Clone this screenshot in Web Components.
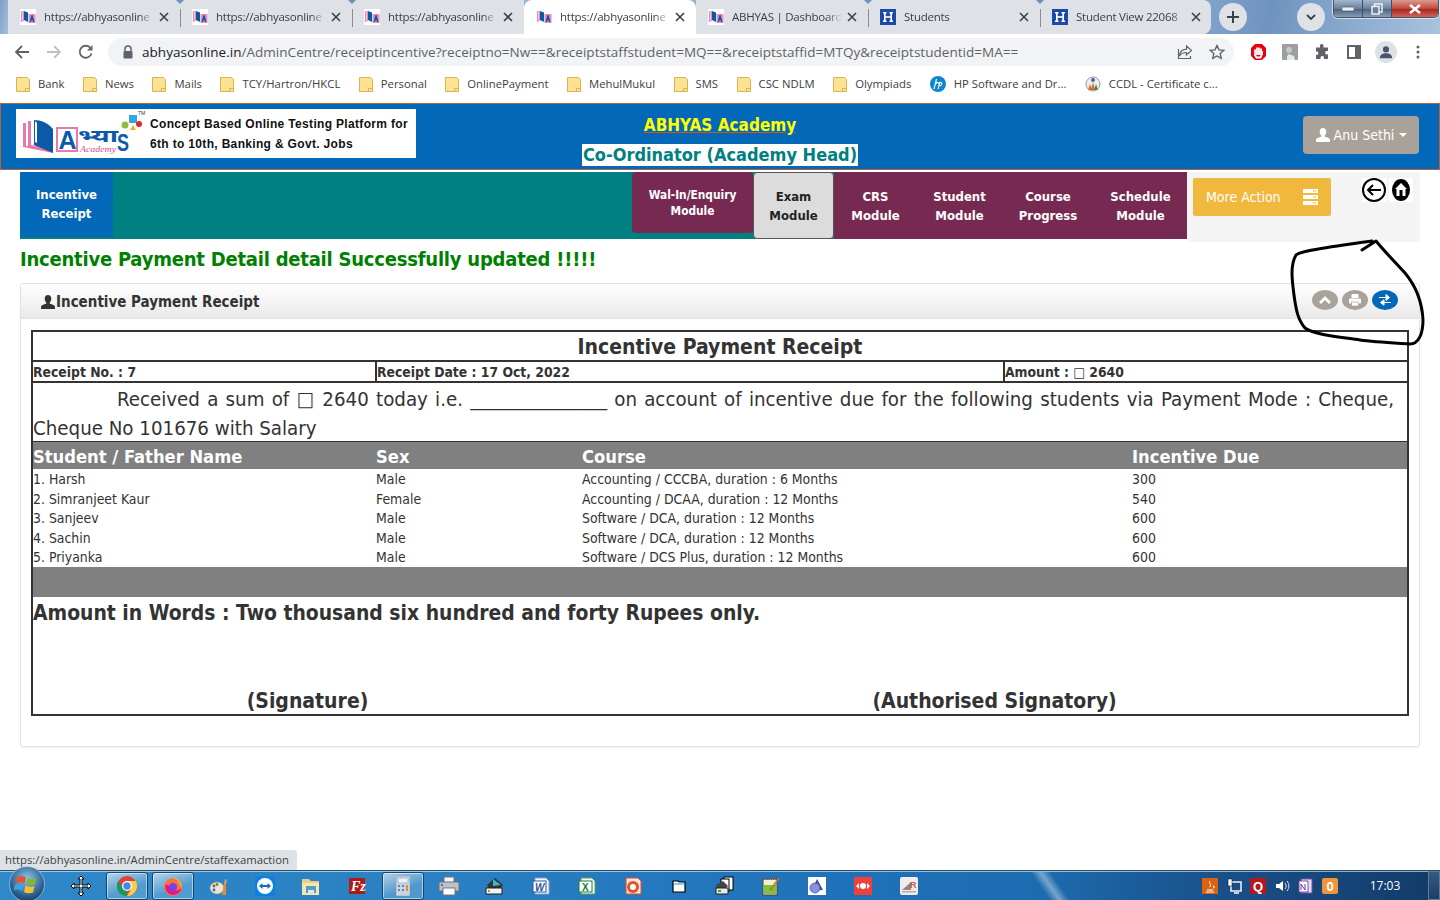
<!DOCTYPE html>
<html>
<head>
<meta charset="utf-8">
<title>Incentive Payment Receipt</title>
<style>
    html, body { margin: 0; height: 100%; background: #fff; overflow: hidden; }
    body { font-family: "DejaVu Sans Condensed", "DejaVu Sans", sans-serif; font-stretch: condensed; }
    #desk { position: relative; display: flex; flex-direction: column; width: 1440px; height: 900px; overflow: hidden; }
    #main { flex: 1; min-height: 0; }
</style>
</head>
<body>
<div id="desk">
    <browser-tabs></browser-tabs>
    <browser-toolbar url="abhyasonline.in" path="/AdminCentre/receiptincentive?receiptno=Nw==&amp;receiptstaffstudent=MQ==&amp;receiptstaffid=MTQy&amp;receiptstudentid=MA=="></browser-toolbar>
    <bookmark-bar></bookmark-bar>
    <div id="main">
        <app-header></app-header>
        <module-nav></module-nav>
        <flash-message>Incentive Payment Detail detail Successfully updated !!!!!</flash-message>
        <receipt-panel heading="Incentive Payment Receipt">
            <incentive-receipt></incentive-receipt>
        </receipt-panel>
    </div>
    <win-taskbar></win-taskbar>
    <status-bubble>https://abhyasonline.in/AdminCentre/staffexamaction</status-bubble>
    <pen-scribble></pen-scribble>
</div>

<script>
const UI_FONT = '"Open Sans", "Noto Sans", sans-serif';
const PAGE_FONT = '"DejaVu Sans Condensed", "DejaVu Sans", sans-serif';

const ABHYAS_ICON = `<svg width="16" height="16" viewBox="0 0 16 16"><rect width="16" height="16" fill="#fff"/>
    <path d="M1 2h1.500v11H1zM3 2h1v10H3z" fill="#e98ab8"/><path d="M4 2l4 1.500V13L4 11z" fill="#0b5aa8"/>
    <rect x="8.500" y="5" width="7" height="9" fill="#e98ab8"/><path d="M9.500 13l2-7h1l2 7h-1.400l-.4-1.500h-1.500L10.800 13z" fill="#0b5aa8"/></svg>`;
const H_ICON = `<svg width="16" height="16" viewBox="0 0 16 16"><rect width="16" height="16" fill="#1c4aa8"/>
    <rect x="3" y="3" width="3.500" height="1.500" fill="#fff"/><rect x="9.500" y="3" width="3.500" height="1.500" fill="#fff"/>
    <rect x="3" y="11.500" width="3.500" height="1.500" fill="#fff"/><rect x="9.500" y="11.500" width="3.500" height="1.500" fill="#fff"/>
    <rect x="4" y="3" width="1.700" height="10" fill="#fff"/><rect x="10.300" y="3" width="1.700" height="10" fill="#fff"/><rect x="4" y="7.200" width="8" height="1.600" fill="#fff"/></svg>`;
const PERSON = `M8 1c2 0 3.300 1.600 3.300 3.800 0 1.500-.6 2.900-1.500 3.600v1.300c2.600.7 5.200 1.600 5.200 3.100V15H1v-2.200c0-1.500 2.600-2.400 5.200-3.100V8.400C5.300 7.700 4.700 6.300 4.700 4.800 4.700 2.600 6 1 8 1z`;

class BrowserTabs extends HTMLElement {
    constructor() {
        super();
        this.shadow = this.attachShadow({mode: 'open'});
        const tabs = [
            ['https://abhyasonline', ABHYAS_ICON],
            ['https://abhyasonline', ABHYAS_ICON],
            ['https://abhyasonline', ABHYAS_ICON],
            ['https://abhyasonline', ABHYAS_ICON, true],
            ['ABHYAS | Dashboard', ABHYAS_ICON],
            ['Students', H_ICON],
            ['Student View 22068', H_ICON]
        ];
        this.shadow.innerHTML = `<style>
            :host { display: flex; height: 34px; flex: none; padding-left: 8px; box-sizing: border-box;
                background: linear-gradient(100deg, #7f9fc6 0, #a9c2de 1%, #7fa1c9 84%, #6f93bf 88%, #a9c3de 100%); }
            .tab { position: relative; display: flex; align-items: center; box-sizing: border-box; width: 172px; height: 34px;
                background: #dee1e6; padding: 0 0 1px 12px; font: 11.500px ${UI_FONT}; letter-spacing: -.25px; color: #3c4043; }
            .tab:first-child { border-top-left-radius: 8px; }
            .tab:nth-child(8) { border-top-right-radius: 8px; border-bottom-right-radius: 8px; width: 171px; }
            .tab.active { background: #fff; border-radius: 8px 8px 0 0; color: #3c4043; }
            .tab.sep::before { content: ''; position: absolute; left: 0; top: 9px; height: 18px; width: 1px; background: #8a8d91; }
            .tab.sep::after { content: ''; position: absolute; left: -4px; top: 0; border: 4px solid transparent; border-top-color: #6f93bf; border-bottom: 0; }
            .fav { width: 16px; height: 16px; flex: none; }
            .label { width: 110px; margin-left: 8px; white-space: nowrap; overflow: hidden;
                -webkit-mask-image: linear-gradient(90deg, #000 86%, transparent 100%); mask-image: linear-gradient(90deg, #000 86%, transparent 100%); }
            .close { margin-left: 5px; width: 10px; height: 10px; flex: none; }
            .round { width: 28px; height: 28px; margin-top: 3px; border-radius: 50%; background: #dee1e6; display: flex; align-items: center; justify-content: center; flex: none; }
            .controls { display: flex; width: 106px; height: 18px; margin-left: 8px; box-sizing: border-box; border: 1px solid #41546b; border-top: 0;
                border-radius: 0 0 5px 5px; overflow: hidden; box-shadow: 0 0 0 1px rgba(255,255,255,.6); }
            .controls div { display: flex; align-items: center; justify-content: center; }
            .min, .max { width: 28px; background: linear-gradient(#a3b8cf, #6d8098 50%, #4f6480 55%, #8a9db5); border-right: 1px solid #3f5066; }
            .x { flex: 1; background: linear-gradient(#dd9a90, #c1493d 50%, #a52a20 55%, #d0645a); }
        </style>`;
        this.shadow.innerHTML += tabs.map((t, i) => `<div class="tab ${t[2] ? 'active' : ''} ${i > 0 && i !== 3 && i !== 4 ? 'sep' : ''}">
            <span class="fav">${t[1]}</span><span class="label">${t[0]}</span>
            <svg class="close" viewBox="0 0 10 10"><path d="M1 1l8 8M9 1l-8 8" stroke="#3c4043" stroke-width="1.600"/></svg></div>`).join('');
        this.shadow.innerHTML += `
            <div class="round" style="margin-left:8px"><svg width="14" height="14" viewBox="0 0 14 14"><path d="M7 1v12M1 7h12" stroke="#3c4043" stroke-width="2"/></svg></div>
            <div class="round" style="margin-left:50px"><svg width="12" height="12" viewBox="0 0 12 12"><path d="M2 4l4 4 4-4" fill="none" stroke="#3c4043" stroke-width="1.800"/></svg></div>
            <div class="controls">
                <div class="min"><svg width="12" height="6"><rect y="1" width="12" height="4" fill="#e8eef5" stroke="#33475e" stroke-width=".6"/></svg></div>
                <div class="max"><svg width="12" height="12" viewBox="0 0 12 12"><rect x="3.500" y="1" width="7.500" height="8" fill="none" stroke="#f2f5f9" stroke-width="1.400"/><rect x="1" y="3.500" width="7" height="7.500" fill="#6d8098" stroke="#f2f5f9" stroke-width="1.400"/></svg></div>
                <div class="x"><svg width="14" height="10" viewBox="0 0 14 10"><path d="M2 1l10 8M12 1L2 9" stroke="#fff" stroke-width="2.600"/></svg></div>
            </div>`;
    }
}

class BrowserToolbar extends HTMLElement {
    constructor() {
        super();
        this.shadow = this.attachShadow({mode: 'open'});
        this.shadow.innerHTML = `<style>
            :host { display: flex; align-items: center; height: 36px; flex: none; background: #fff; box-sizing: border-box; padding-left: 14px; }
            .nav { width: 32px; display: flex; }
            .pill { display: flex; align-items: center; width: 1126px; height: 28px; margin-left: -1px; border-radius: 14px; background: #f1f3f4; box-sizing: border-box; padding-left: 14px;
                font: 13.500px ${UI_FONT}; letter-spacing: .03px; color: #5f6368; white-space: nowrap; }
            .url { margin-left: 8px; flex: 1; }
            .url b { font-weight: 400; color: #202124; }
            .tools { display: flex; align-items: center; }
            .ico { width: 32px; display: flex; justify-content: center; align-items: center; }
            .avatar { width: 22px; height: 22px; border-radius: 50%; background: #dee1e6; display: flex; align-items: center; justify-content: center; }
        </style>
        <div class="nav"><svg width="16" height="16" viewBox="0 0 16 16"><path d="M15 8H2M8 2L2 8l6 6" fill="none" stroke="#5f6368" stroke-width="1.800"/></svg></div>
        <div class="nav"><svg width="16" height="16" viewBox="0 0 16 16"><path d="M1 8h13M8 2l6 6-6 6" fill="none" stroke="#bdc1c6" stroke-width="1.800"/></svg></div>
        <div class="nav" style="width:31px"><svg width="16" height="16" viewBox="0 0 16 16"><path d="M13.500 9.500A6 6 0 1 1 12 3.500" fill="none" stroke="#5f6368" stroke-width="1.800"/><path d="M14.500 1v5.500H9z" fill="#5f6368"/></svg></div>
        <div class="pill">
            <svg width="12" height="14" viewBox="0 0 12 14" style="flex:none"><path d="M3 6V4a3 3 0 0 1 6 0v2" fill="none" stroke="#5f6368" stroke-width="1.500"/><rect x="1.500" y="6" width="9" height="7.500" rx="1" fill="#5f6368"/></svg>
            <span class="url"><b>${this.getAttribute('url')}</b>${this.getAttribute('path').replace(/&/g, '&amp;')}</span>
            <span class="tools">
                <span class="ico"><svg width="16" height="16" viewBox="0 0 16 16"><path d="M9.500 2l5 4.500-5 4.500V8.500C6.500 8.500 4 9.500 2.500 12c.3-4 3-6.500 7-6.800zM1.500 5v9.500h12V12" fill="none" stroke="#5f6368" stroke-width="1.200"/></svg></span>
                <span class="ico" style="margin-right:1px"><svg width="16" height="16" viewBox="0 0 16 16"><path d="M8 1.500l2 4.400 4.800.5-3.600 3.200 1 4.700L8 12l-4.200 2.300 1-4.700L1.200 6.400 6 5.900z" fill="none" stroke="#5f6368" stroke-width="1.400"/></svg></span>
            </span>
        </div>
        <div class="tools" style="margin-left:8px">
            <span class="ico"><svg width="17" height="18" viewBox="0 0 17 18"><path d="M5 1h7l4 4v8l-4 4H5l-4-4V5z" fill="#e60012"/><path d="M5 13V6.500M7 12V4.500M9 12V4.500M11 12V5.500M5 12l1.500 2.500h4L12 11V8" stroke="#fff" stroke-width="1.800" fill="none"/></svg></span>
            <span class="ico"><svg width="16" height="16" viewBox="0 0 16 16"><rect width="16" height="16" rx="1" fill="#9e9e9e"/><circle cx="7" cy="6" r="3" fill="#c8c8c8"/><path d="M5 16v-4l2-2 2 1 3 1 1 4z" fill="#dfeaf3"/></svg></span>
            <span class="ico"><svg width="16" height="16" viewBox="0 0 16 16"><path d="M6 1.500a1.800 1.800 0 0 1 3.500 0V3.500H14V7h-1.500a1.800 1.800 0 0 0 0 3.500H14V15H10v-1.500a1.800 1.800 0 0 0-3.500 0V15H2v-4h1a1.800 1.800 0 0 0 0-3.500H2V3.500h4z" fill="#5f6368"/></svg></span>
            <span class="ico"><svg width="14" height="14" viewBox="0 0 14 14"><rect x="1" y="1" width="12" height="12" fill="none" stroke="#5f6368" stroke-width="2"/><rect x="8" y="1" width="5" height="12" fill="#5f6368"/></svg></span>
            <span class="ico"><span class="avatar"><svg width="14" height="14" viewBox="0 0 16 16"><circle cx="8" cy="5" r="3.500" fill="#4a5568"/><path d="M1 15c0-4 3.500-5.500 7-5.500s7 1.500 7 5.500z" fill="#4a5568"/></svg></span></span>
            <span class="ico"><svg width="4" height="14" viewBox="0 0 4 14"><circle cx="2" cy="2" r="1.500" fill="#5f6368"/><circle cx="2" cy="7" r="1.500" fill="#5f6368"/><circle cx="2" cy="12" r="1.500" fill="#5f6368"/></svg></span>
        </div>`;
    }
}

class BookmarkBar extends HTMLElement {
    constructor() {
        super();
        this.shadow = this.attachShadow({mode: 'open'});
        const folder = `<svg width="14" height="16" viewBox="0 0 14 16"><path d="M.5 1.500h11l2 2v12H.5z" fill="#fde293" stroke="#d9b54f"/><path d="M9.500 15.500v-3h4" fill="none" stroke="#d9b54f"/></svg>`;
        const hp = `<svg width="16" height="16" viewBox="0 0 16 16"><circle cx="8" cy="8" r="8" fill="#0f86d2"/><path d="M6.500 3L4 13M10 6L8 13M5.800 8c1-2.200 3-2 2.800 0M10 6.500c2.500-.8 2.500 3-.5 3.500" fill="none" stroke="#fff" stroke-width="1.100"/></svg>`;
        const ccdl = `<svg width="16" height="16" viewBox="0 0 16 16"><circle cx="8" cy="8" r="7" fill="#eee" stroke="#999"/><path d="M3 14l2-6 2 6zM6 14l2-8 2 8z" fill="#e2662b"/><path d="M9 14l2-6 2 6z" fill="#3f8f3f"/><circle cx="8" cy="4" r="2" fill="#3569b5"/></svg>`;
        const items = [['Bank'], ['News'], ['Mails'], ['TCY/Hartron/HKCL'], ['Personal'], ['OnlinePayment'], ['MehulMukul'], ['SMS'], ['CSC NDLM'], ['Olympiads'],
            ['HP Software and Dr...', hp], ['CCDL - Certificate c...', ccdl]];
        this.shadow.innerHTML = `<style>
            :host { display: flex; align-items: center; height: 30px; flex: none; box-sizing: border-box; background: #fff; padding: 0 0 3px 16px; gap: 18.500px; font: 11.300px ${UI_FONT}; color: #3c4043; }
            .mark { display: flex; align-items: center; gap: 8px; white-space: nowrap; }
        </style>` + items.map(i => `<span class="mark">${i[1] || folder}<span>${i[0]}</span></span>`).join('');
    }
}

class AppHeader extends HTMLElement {
    constructor() {
        super();
        this.shadow = this.attachShadow({mode: 'open'});
        this.shadow.innerHTML = `<style>
            :host { display: grid; grid-template-columns: 1fr auto 1fr; align-items: start; height: 67px; margin-top: 3px; box-sizing: border-box;
                background: #0468b8; border: 1px solid #b5613a; padding: 0 20px 0 15px; }
            .logo { display: flex; align-items: center; width: 400px; height: 49px; margin-top: 5px; background: #fff; box-sizing: border-box; padding-left: 6px; }
            .tag { font: bold 12px/20px "Liberation Sans", sans-serif; color: #111; margin-left: 4px; letter-spacing: .33px; white-space: nowrap; }
            .center { margin: 9px 0 0 5px; text-align: center; font-family: ${PAGE_FONT}; font-stretch: condensed; font-weight: bold; font-size: 17px; white-space: nowrap; }
            .academy { color: #ff0; text-decoration: underline; text-decoration-color: #d2541e; line-height: 24px; }
            .role { display: inline-block; margin-top: 7px; background: #fff; color: #008080; padding: 0 1px; font-size: 18px; line-height: 22px; }
            .user { justify-self: end; width: 116px; height: 38px; margin-top: 12px; display: flex; align-items: center; justify-content: center; gap: 3px; border-radius: 4px; background: #a9a29b; color: #fff; font: 14px ${PAGE_FONT}; font-stretch: condensed; }
            .caret { width: 0; height: 0; border: 4px solid transparent; border-top-color: #fff; border-bottom: 0; margin-left: 2px; }
        </style>
        <div class="logo">
            <svg width="124" height="49" viewBox="0 0 124 49" style="flex:none">
                <path d="M1 14h3v24H1zM6 12h3v25H6z" fill="#e878ae"/>
                <path d="M1 38l30 6v-4L9 36z" fill="#e878ae"/>
                <path d="M12 11c7 0 14 3 19 9v24L12 36z" fill="#0b5aa8"/><path d="M15 14v20l-2-1V12z" fill="#fff"/>
                <rect x="35" y="19" width="20" height="23" fill="#fff" stroke="#e878ae" stroke-width="2"/>
                <text x="36.500" y="40" font-family="Liberation Sans, sans-serif" font-weight="bold" font-size="25" fill="#0b5aa8">A</text>
                <text x="56" y="33" font-family="Noto Sans Devanagari, Noto Sans, sans-serif" font-weight="bold" font-size="18" textLength="40" lengthAdjust="spacingAndGlyphs" fill="#0b5aa8">भ्या</text>
                <text x="58" y="43" font-family="Liberation Serif, serif" font-style="italic" font-size="8.500" textLength="36" lengthAdjust="spacingAndGlyphs" fill="#d44a8c">Academy</text>
                <text x="95" y="42" font-family="Liberation Sans, sans-serif" font-weight="bold" font-size="24" textLength="12" lengthAdjust="spacingAndGlyphs" fill="#0b5aa8">S</text>
                <circle cx="103" cy="16" r="3.500" fill="#8dbb3a"/><rect x="107" y="6" width="8" height="8" fill="#35a7e0"/><circle cx="117" cy="15" r="3" fill="#e2262c"/><path d="M108 21l3-5 3 5z" fill="#f4b21f"/>
                <text x="116" y="6" font-family="Liberation Sans, sans-serif" font-size="5" fill="#333">TM</text>
            </svg>
            <div class="tag">Concept Based Online Testing Platform for<br>6th to 10th, Banking &amp; Govt. Jobs</div>
        </div>
        <div class="center"><div class="academy">ABHYAS Academy</div><div class="role">Co-Ordinator (Academy Head)</div></div>
        <div class="user"><svg width="16" height="16" viewBox="0 0 16 16"><path d="${PERSON}" fill="#fff"/></svg>Anu Sethi<span class="caret"></span></div>`;
    }
}

class ModuleNav extends HTMLElement {
    constructor() {
        super();
        this.shadow = this.attachShadow({mode: 'open'});
        const modules = [
            ['Wal-In/Enquiry<br>Module', 121, 'walk'],
            ['Exam<br>Module', 81, 'light'],
            ['CRS<br>Module', 83, ''],
            ['Student<br>Module', 85, ''],
            ['Course<br>Progress', 92, ''],
            ['Schedule<br>Module', 93, '']
        ];
        this.shadow.innerHTML = `<style>
            :host { display: flex; align-items: flex-start; margin: 2px 20px 0; font: bold 13px/18.500px ${PAGE_FONT}; font-stretch: condensed; color: #fff; }
            .bar { display: flex; flex: 1; height: 67px; background: #008080; }
            .item { display: flex; align-items: center; justify-content: center; box-sizing: border-box; text-align: center; background: #762a52; padding-top: 2px; }
            .current { width: 93px; height: 65px; background: #0468b8; margin-right: auto; padding-top: 0; }
            .walk { height: 61px; border-radius: 4px; font-size: 11.800px; line-height: 16px; padding-top: 0; }
            .light { background: #dcdcdc; color: #222; border: 1px solid #555; border-radius: 4px; }
            .side { display: flex; justify-content: space-between; box-sizing: border-box; width: 233px; height: 70px; background: #f4f4f4; border-radius: 0 0 4px 4px; padding: 6px 7px 0 6px; }
            .more { display: flex; align-items: center; justify-content: space-between; box-sizing: border-box; width: 138px; height: 38px; padding: 0 13px; border-radius: 2px; background: #f0b83c; font-weight: normal; font-size: 14px; }
            .tools { display: flex; gap: 3px; height: 24px; margin-top: 0; }
            .tools span { width: 24px; height: 24px; background: #fff; }
        </style>
        <div class="bar">
            <div class="item current">Incentive<br>Receipt</div>
            ${modules.map(m => `<div class="item ${m[2]}" style="width:${m[1]}px">${m[0]}</div>`).join('')}
        </div>
        <div class="side">
            <div class="more">More Action
                <svg width="15" height="16" viewBox="0 0 15 16" fill="#fff"><rect width="15" height="4"/><rect y="6" width="15" height="4"/><rect y="12" width="15" height="4"/><g fill="#f0b83c"><rect x="10" y="1.500" width="3" height="1"/><rect x="10" y="7.500" width="3" height="1"/><rect x="10" y="13.500" width="3" height="1"/></g></svg>
            </div>
            <div class="tools">
                <span><svg width="24" height="24" viewBox="0 0 24 24"><circle cx="12" cy="12" r="11" fill="#fff" stroke="#000" stroke-width="2"/><path d="M19 12H6M11 7l-5 5 5 5" fill="none" stroke="#000" stroke-width="2"/></svg></span>
                <span><svg width="24" height="24" viewBox="0 0 24 24"><ellipse cx="12" cy="12" rx="9" ry="11" fill="#000"/><path d="M12 5l6 6h-1.500v7h-9v-7H6z" fill="#fff"/><rect x="10.500" y="12" width="3" height="6" fill="#000"/></svg></span>
            </div>
        </div>`;
    }
}

class FlashMessage extends HTMLElement {
    constructor() {
        super();
        this.attachShadow({mode: 'open'}).innerHTML = `<style>
            :host { display: block; margin: 4px 20px 0; height: 37px; font: bold 20px/26px ${PAGE_FONT}; font-stretch: condensed; letter-spacing: -.22px; color: #008000; white-space: nowrap; }
        </style><slot></slot>`;
    }
}

class ReceiptPanel extends HTMLElement {
    constructor() {
        super();
        this.attachShadow({mode: 'open'}).innerHTML = `<style>
            :host { display: block; margin: 0 20px; height: 464px; box-sizing: border-box; border: 1px solid #e3e3e3; border-radius: 3px; background: #fff; box-shadow: 0 1px 2px rgba(0,0,0,.06); }
            .head { display: flex; align-items: center; height: 35px; box-sizing: border-box; padding: 2px 21px 0 19px; border-bottom: 1px solid #e1e1e1;
                background: linear-gradient(#fff, #e9e9e9); font: bold 15px ${PAGE_FONT}; font-stretch: condensed; color: #333; }
            .title { flex: 1; }
            .body { padding: 11px 10px 0; }
            .actions { display: flex; gap: 4px; margin-top: -5px; }
            .actions span { display: flex; align-items: center; justify-content: center; width: 26px; height: 20px; border-radius: 13px / 10px; background: #a9a29b; }
            .actions .blue { background: #0468b8; }
        </style>
        <div class="head">
            <svg width="16" height="16" viewBox="0 0 16 16"><path d="${PERSON}" fill="#333"/></svg>
            <span class="title">${this.getAttribute('heading')}</span>
            <div class="actions">
                <span><svg width="12" height="10" viewBox="0 0 12 10"><path d="M1 8l5-5 5 5" fill="none" stroke="#fff" stroke-width="3"/></svg></span>
                <span><svg width="14" height="14" viewBox="0 0 14 14"><rect x="3.500" y="1" width="7" height="4" fill="#fff"/><rect x="1" y="5.500" width="12" height="5" rx="1" fill="#fff"/><rect x="3.500" y="9" width="7" height="4" fill="#fff" stroke="#a9a29b" stroke-width=".7"/></svg></span>
                <span class="blue"><svg width="14" height="12" viewBox="0 0 14 12"><path d="M1 3.500h9M8 .5l3.500 3-3.500 3z" fill="#fff" stroke="#fff"/><path d="M13 8.500H4M6 5.800L2.500 8.500 6 11.200z" fill="#fff" stroke="#fff"/></svg></span>
            </div>
        </div>
        <div class="body"><slot></slot></div>`;
    }
}

class IncentiveReceipt extends HTMLElement {
    constructor() {
        super();
        this.shadow = this.attachShadow({mode: 'open'});
        const rows = [
            ['1. Harsh', 'Male', 'Accounting / CCCBA, duration : 6 Months', '300'],
            ['2. Simranjeet Kaur', 'Female', 'Accounting / DCAA, duration : 12 Months', '540'],
            ['3. Sanjeev', 'Male', 'Software / DCA, duration : 12 Months', '600'],
            ['4. Sachin', 'Male', 'Software / DCA, duration : 12 Months', '600'],
            ['5. Priyanka', 'Male', 'Software / DCS Plus, duration : 12 Months', '600']
        ];
        this.shadow.innerHTML = `<style>
            :host { display: block; box-sizing: border-box; width: 1378px; height: 386px; border: 2px solid #333; font-family: ${PAGE_FONT}; font-stretch: condensed; color: #333; }
            .title { height: 28px; text-align: center; font: bold 21px/30px ${PAGE_FONT}; font-stretch: condensed; border-bottom: 2px solid #333; }
            .meta { display: grid; grid-template-columns: 342px 628px 1fr; height: 19px; font: bold 13.800px/20px ${PAGE_FONT}; font-stretch: condensed; border-bottom: 2px solid #333; }
            .meta div + div { border-left: 2px solid #333; }
            .para { box-sizing: border-box; height: 59px; padding: 2px 13px 0 0; font-size: 20.300px; line-height: 29px; text-align: justify; text-indent: 84px; border-bottom: 1px solid #333; overflow: hidden; }
            .grid { display: grid; grid-template-columns: 343px 206px 550px 1fr; }
            .th { box-sizing: border-box; padding-top: 1px; background: #808080; color: #fff; font-weight: bold; font-size: 18.200px; line-height: 27px; height: 27px; }
            .td { box-sizing: border-box; padding-top: 1px; font-size: 13.900px; line-height: 19.500px; height: 19.500px; white-space: nowrap; }
            .band { height: 30px; background: #808080; }
            .words { height: 72px; font: bold 20.900px/32px ${PAGE_FONT}; font-stretch: condensed; }
            .sign { display: grid; grid-template-columns: 549px 1fr; height: 28px; text-align: center; font: bold 21px/30px ${PAGE_FONT}; font-stretch: condensed; padding-top: 17px; }
        </style>
        <div class="title">Incentive Payment Receipt</div>
        <div class="meta"><div>Receipt No. : 7</div><div>Receipt Date : 17 Oct, 2022</div><div>Amount : \u25A1 2640</div></div>
        <div class="para">Received a sum of \u25A1 2640 today i.e. _______________ on account of incentive due for the following students via Payment Mode : Cheque, Cheque No 101676 with Salary</div>
        <div class="grid">
            ${['Student / Father Name', 'Sex', 'Course', 'Incentive Due'].map(h => `<div class="th">${h}</div>`).join('')}
            ${rows.map(r => r.map(c => `<div class="td">${c}</div>`).join('')).join('')}
        </div>
        <div class="band"></div>
        <div class="words">Amount in Words : Two thousand six hundred and forty Rupees only.</div>
        <div class="sign"><div>(Signature)</div><div>(Authorised Signatory)</div></div>`;
    }
}

class WinTaskbar extends HTMLElement {
    constructor() {
        super();
        this.shadow = this.attachShadow({mode: 'open'});
        const apps = [
            [`<svg width="20" height="20" viewBox="0 0 20 20"><path d="M10 0l3 3h-2v6h6V7l3 3-3 3v-2h-6v6h2l-3 3-3-3h2v-6H3v2l-3-3 3-3v2h6V3H7z" fill="#fff" stroke="#000"/></svg>`],
            [`<svg width="20" height="20" viewBox="0 0 20 20"><circle cx="10" cy="10" r="10" fill="#dc4437"/><path d="M10 10L1.300 15A10 10 0 0 0 10 20z" fill="#0f9d58"/><path d="M1.300 15A10 10 0 0 1 1.300 5L6 12z" fill="#0f9d58"/><path d="M10 5h8.700A10 10 0 0 1 10 20l4-7z" fill="#ffcd40"/><circle cx="10" cy="10" r="5" fill="#fff"/><circle cx="10" cy="10" r="3.700" fill="#4285f4"/></svg>`, 'on'],
            [`<svg width="20" height="20" viewBox="0 0 20 20"><circle cx="10" cy="11" r="9" fill="#ff7139"/><path d="M10 1c5 2 9 6 9 11l-4-7z" fill="#ffcb2f"/><path d="M3 8a8 8 0 0 0 7 11c5 0 8-4 8-7-2 3-6 3-8 1z" fill="#e31587"/><circle cx="10" cy="11" r="4" fill="#7542e5"/></svg>`, 'on'],
            [`<svg width="20" height="20" viewBox="0 0 20 20"><ellipse cx="8" cy="12" rx="7" ry="6" fill="#e9e4d4" stroke="#9a927a" stroke-width=".5"/><circle cx="5" cy="10" r="1.400" fill="#d33"/><circle cx="8" cy="8.500" r="1.400" fill="#3a3"/><circle cx="5" cy="14" r="1.400" fill="#36c"/><path d="M13 19l2-11 2 0 0 11z" fill="#e9892b"/><path d="M15 8l1-5 2 1-1 4z" fill="#caa675"/></svg>`],
            [`<svg width="20" height="20" viewBox="0 0 20 20"><rect width="20" height="20" rx="3" fill="#0e7fe0"/><circle cx="10" cy="10" r="8" fill="#fff"/><path d="M4 10l3.500-3v2h5V7l3.500 3-3.500 3v-2h-5v2z" fill="#0e6ec7"/></svg>`],
            [`<svg width="20" height="20" viewBox="0 0 20 20"><path d="M1 3h7l2 2h8v14H1z" fill="#e6cf8b"/><path d="M1 7h17v12H1z" fill="#f5e6ae"/><rect x="5" y="10" width="10" height="7" fill="#5a9bc6"/><rect x="7" y="14" width="6" height="3" fill="#d8ecf7"/></svg>`],
            [`<svg width="20" height="20" viewBox="0 0 20 20"><rect x="2" y="2" width="16" height="16" fill="#b01a14"/><text x="4" y="15" font-family="Liberation Serif, serif" font-style="italic" font-weight="bold" font-size="14" fill="#fff">Fz</text></svg>`],
            [`<svg width="20" height="22" viewBox="0 0 20 22"><rect x="3" y="1" width="14" height="20" rx="1" fill="#c9d6e2" stroke="#7d93a8" stroke-width=".5"/><rect x="5" y="3" width="10" height="5" fill="#e8f0f7" stroke="#7f97ad" stroke-width=".5"/><g fill="#5a86b4"><rect x="5" y="10" width="2" height="2"/><rect x="9" y="10" width="2" height="2"/><rect x="5" y="14" width="2" height="2"/><rect x="9" y="14" width="2" height="2"/></g><rect x="13" y="10" width="2" height="6" fill="#e88b2b"/></svg>`, 'on'],
            [`<svg width="22" height="20" viewBox="0 0 22 20"><rect x="6" y="1" width="10" height="6" fill="#f4f4f4" stroke="#777"/><rect x="1" y="6" width="20" height="9" rx="1" fill="#b8c3cc" stroke="#66727c"/><rect x="5" y="12" width="12" height="7" fill="#fff" stroke="#777"/><circle cx="4" cy="9" r="1" fill="#39557a"/></svg>`],
            [`<svg width="20" height="20" viewBox="0 0 20 20"><path d="M2 9l8-7 8 7-3 4H4z" fill="#333"/><path d="M8 3l8 6-8 1z" fill="#3fb6c6"/><rect x="1" y="12" width="16" height="6" fill="#f3f3f3" stroke="#222"/><circle cx="4" cy="15" r="1" fill="#2a2"/></svg>`],
            [`<svg width="20" height="20" viewBox="0 0 20 20"><path d="M4 2h11l3 3v13H4z" fill="#f5f8fd" stroke="#8aa2c6"/><rect x="2" y="5" width="13" height="11" fill="#fff" stroke="#2a5699"/><text x="4" y="14.500" font-family="Liberation Sans, sans-serif" font-weight="bold" font-style="italic" font-size="10" fill="#2a5699">W</text></svg>`],
            [`<svg width="20" height="20" viewBox="0 0 20 20"><path d="M4 2h11l3 3v13H4z" fill="#f5fbf3" stroke="#5d9f56"/><rect x="2" y="5" width="13" height="11" fill="#fff" stroke="#1d7a3a"/><text x="5" y="14.500" font-family="Liberation Sans, sans-serif" font-weight="bold" font-size="10" fill="#1d7a3a">X</text></svg>`],
            [`<svg width="20" height="20" viewBox="0 0 20 20"><path d="M3 2h12l3 3v13H3z" fill="#fbe3da" stroke="#d2502a"/><circle cx="10" cy="11" r="6" fill="#e0552b"/><circle cx="10" cy="11" r="3" fill="#fff"/></svg>`],
            [`<svg width="14" height="14" viewBox="0 0 14 14"><path d="M1 2h5l1 1h6v10H1z" fill="#fff" stroke="#000" stroke-width="1.200"/><path d="M2 4h10v2H2z" fill="#7fd0e8"/></svg>`],
            [`<svg width="20" height="20" viewBox="0 0 20 20"><rect x="9" y="1" width="9" height="13" fill="#fff" stroke="#000"/><rect x="6" y="3" width="8" height="12" fill="#fff" stroke="#000"/><path d="M1 9l7-4 5 5-3 3H2z" fill="#444"/><rect x="1" y="12" width="12" height="6" fill="#e9e9e9" stroke="#222"/><rect x="3" y="14" width="3" height="2" fill="#2a2"/></svg>`],
            [`<svg width="20" height="20" viewBox="0 0 20 20"><rect x="2" y="3" width="14" height="16" fill="#f3f0d2" stroke="#444"/><rect x="3" y="9" width="12" height="9" fill="#83c13b"/><path d="M2 3h14" stroke="#666" stroke-dasharray="1 1" stroke-width="2"/><path d="M18 1l1 1-8 11-2 1 1-2z" fill="#e9b82c" stroke="#6d2c18" stroke-width=".5"/></svg>`],
            [`<svg width="18" height="18" viewBox="0 0 18 18"><rect width="18" height="18" fill="#fff"/><path d="M9 2l6 11H4z" fill="#3d4d92"/><circle cx="7" cy="11" r="5" fill="#8b8fe0" stroke="#3d4d92" stroke-width=".7"/></svg>`],
            [`<svg width="18" height="18" viewBox="0 0 18 18"><rect width="18" height="18" fill="#f0403c"/><circle cx="9" cy="9" r="3" fill="#fff"/><path d="M5 6L2 9l3 3zM13 6l3 3-3 3z" fill="#fff"/></svg>`],
            [`<svg width="18" height="18" viewBox="0 0 18 18"><rect width="18" height="18" rx="2" fill="#eee"/><path d="M2 13l9-8v8z" fill="#8a8a8a"/><text x="10" y="11" font-family="Liberation Sans, sans-serif" font-weight="bold" font-size="9" fill="#d8573f">R</text><rect x="2" y="14" width="14" height="1.500" fill="#d8a090"/></svg>`]
        ];
        const tray = [
            `<rect width="16" height="16" fill="#d9630f"/><path d="M5 12h6M4 14h8M8 3c-2 2 2 3 0 6M11 8c2 0 2 2 0 2" fill="none" stroke="#fff"/>`,
            `<rect x="5" y="4" width="10" height="9" fill="none" stroke="#fff" stroke-width="1.400"/><rect x="2" y="1" width="4" height="7" fill="#fff" stroke="#000" stroke-width=".5"/><path d="M8 15h5" stroke="#fff" stroke-width="1.500"/>`,
            `<rect width="16" height="16" rx="1" fill="#b8161c"/><text x="3" y="13" font-family="Liberation Sans, sans-serif" font-weight="bold" font-size="13" fill="#fff">Q</text>`,
            `<path d="M2 6h3l4-3v10l-4-3H2z" fill="#fff"/><path d="M11 5c1.500 2 1.500 4 0 6M13 3c2.500 3 2.500 7 0 10" fill="none" stroke="#dfe9f3"/>`,
            `<rect x="3" y="1" width="11" height="14" fill="#e8def0" stroke="#7a4aa0"/><path d="M1 3h9v11H1z" fill="#fff" stroke="#7a4aa0"/><path d="M3 12V6l4 6V6" fill="none" stroke="#7a2f9e"/>`,
            `<rect width="16" height="16" rx="2" fill="#f0953a"/><text x="4.500" y="13" font-family="Liberation Sans, sans-serif" font-weight="bold" font-size="13" fill="#fff">0</text>`
        ];
        this.shadow.innerHTML = `<style>
            :host { position: relative; display: flex; align-items: center; height: 30px; flex: none; box-sizing: border-box; overflow: visible;
                background: linear-gradient(90deg, #2f88c8 0, #2a80c2 30%, #1f70b8 60%, #1e6cb0 72%, #194f88 85%, #123b68 100%);
                border-top: 1px solid #24506f; box-shadow: inset 0 1px 0 rgba(255,255,255,.55); padding-left: 9px; }
            .orb { width: 36px; height: 36px; flex: none; margin-top: -4px; position: relative; z-index: 1; margin-right: 13px; }
            .app { display: flex; align-items: center; justify-content: center; box-sizing: border-box; width: 46px; height: 28px; flex: none; }
            .app.on { margin: 0 2px; width: 42px; border: 1px solid #15466a; border-radius: 3px; background: linear-gradient(160deg, rgba(255,255,255,.65), rgba(255,255,255,.18) 60%); box-shadow: inset 0 0 0 1px rgba(255,255,255,.5); }
            .tray { display: flex; align-items: center; gap: 8px; margin-left: auto; }
            .tray svg { display: block; }
            .clock { width: 58px; margin: 0 14px 0 10px; text-align: center; font: 12px ${UI_FONT}; color: #fff; }
            .showdesk { width: 12px; height: 29px; box-sizing: border-box; border: 1px solid #5c7c9c; background: linear-gradient(#38587c, #1d3f66); }
            .streak { position: absolute; left: 1040px; top: 1px; width: 20px; height: 28px; transform: skewX(35deg); background: linear-gradient(90deg, transparent, rgba(255,255,255,.4), transparent); pointer-events: none; }
        </style>
        <div class="orb"><svg width="36" height="36" viewBox="0 0 36 36">
            <defs><radialGradient id="g" cx=".5" cy=".35" r=".7"><stop offset="0" stop-color="#8fc4e8"/><stop offset=".7" stop-color="#2a5f8f"/><stop offset="1" stop-color="#13344f"/></radialGradient></defs>
            <circle cx="18" cy="18" r="17.500" fill="url(#g)" stroke="#c6dff0" stroke-width=".6"/>
            <path d="M8 11c3-1.500 6-1 9 .5l-1.500 6c-3-1.500-6-2-9-.5z" fill="#e8522e"/><path d="M18.500 12c3 1.500 6 1.500 9 0l-1.500 6.500c-3 1-6 1-9-.5z" fill="#7cba3a"/>
            <path d="M6 18.500c3-1.500 6-1 9 .5l-1.500 6c-3-1.500-6-2-9-.5z" fill="#3f9fe0"/><path d="M16.500 19.500c3 1.500 6 1.500 9 .5L24 26.500c-3 1-6 1-9-.5z" fill="#f8c02c"/>
        </svg></div>
        ${apps.map(a => `<div class="app ${a[1] || ''}">${a[0]}</div>`).join('')}
        <div class="tray">
            ${tray.map(t => `<svg width="16" height="16" viewBox="0 0 16 16">${t}</svg>`).join('')}
            <div class="clock">17:03</div>
        </div>
        <div class="showdesk"></div>
        <div class="streak"></div>`;
    }
}

class StatusBubble extends HTMLElement {
    constructor() {
        super();
        this.attachShadow({mode: 'open'}).innerHTML = `<style>
            :host { position: absolute; left: 0; bottom: 30px; height: 20px; box-sizing: border-box; padding: 0 8px 0 5px; background: #dee1e6; border-top-right-radius: 3px;
                font: 11.300px/20px ${UI_FONT}; color: #3c4043; white-space: nowrap; }
        </style><slot></slot>`;
    }
}

// hand-drawn ring someone put round the panel buttons
class PenScribble extends HTMLElement {
    constructor() {
        super();
        this.attachShadow({mode: 'open'}).innerHTML = `<style>
            :host { position: absolute; left: 1280px; top: 230px; width: 150px; height: 125px; pointer-events: none; }
        </style>
        <svg width="150" height="125" viewBox="1280 230 150 125"><path d="M1362 250L1376 241C1385 252 1395 262 1405 273C1415 285 1422 300 1423 320C1423 335 1418 344 1410 344C1395 343 1375 342 1360 340C1340 337 1315 335 1305 328C1298 320 1296 310 1294 295C1292 280 1290 265 1296 255C1303 250 1315 250 1330 247C1345 245 1355 243 1372 241" fill="none" stroke="#000" stroke-width="3" stroke-linecap="round" stroke-linejoin="round"/></svg>`;
    }
}

customElements.define('browser-tabs', BrowserTabs);
customElements.define('browser-toolbar', BrowserToolbar);
customElements.define('bookmark-bar', BookmarkBar);
customElements.define('app-header', AppHeader);
customElements.define('module-nav', ModuleNav);
customElements.define('flash-message', FlashMessage);
customElements.define('receipt-panel', ReceiptPanel);
customElements.define('incentive-receipt', IncentiveReceipt);
customElements.define('win-taskbar', WinTaskbar);
customElements.define('status-bubble', StatusBubble);
customElements.define('pen-scribble', PenScribble);
</script>
</body>
</html>
